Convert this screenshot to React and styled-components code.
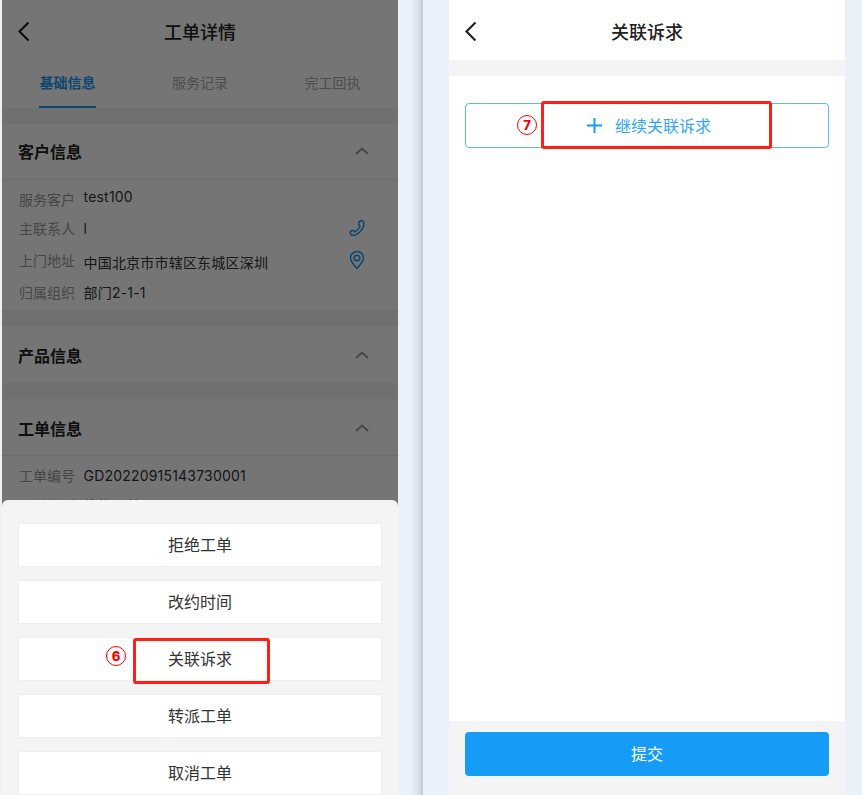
import React from "react";
import styled, { createGlobalStyle } from "styled-components";

const GlobalStyle = createGlobalStyle`
  html, body {
    margin: 0;
    padding: 0;
    height: 100%;
    background: #eaf1fa;
  }
  * {
    box-sizing: border-box;
  }
`;

const FONT = `Inter, "Noto Sans CJK SC", sans-serif`;

const Page = styled.div`
  display: flex;
  width: 862px;
  height: 795px;
  overflow: hidden;
  padding-left: 2px;
  background: #eaf1fa;
  font-family: ${FONT};
`;

const Phone = styled.div`
  position: relative;
  flex: 0 0 396px;
  height: 795px;
  display: flex;
  flex-direction: column;
  overflow: hidden;
  background: #f4f4f4;
`;

const Gutter = styled.div`
  flex: 0 0 51px;
  display: flex;
  padding-left: 12px;
`;

const Shade = styled.div`
  width: 13px;
  height: 100%;
  background: linear-gradient(90deg, #eaf1fa 0%, #dde3ec 60%, #c4cad2 100%);
`;

const Header = styled.div`
  position: relative;
  display: flex;
  align-items: center;
  justify-content: center;
  flex: 0 0 ${(p) => p.$height}px;
  padding-top: ${(p) => p.$pad || 0}px;
  background: #fff;
`;

const Back = styled.svg`
  position: absolute;
  left: 15px;
  top: 21px;
  width: 14px;
  height: 21px;
  fill: none;
  stroke: #222;
  stroke-width: 2.2;
`;

const Title = styled.div`
  font-size: 18px;
  font-weight: 500;
  color: #222;
`;

const Tabs = styled.div`
  display: flex;
  justify-content: space-between;
  flex: 0 0 54px;
  padding: 0 37px;
  background: #fff;
`;

const Tab = styled.div`
  padding-top: 19px;
  width: 57px;
  height: 54px;
  font-size: 14px;
  line-height: 20px;
  text-align: center;
  font-weight: ${(p) => (p.$active ? 700 : 400)};
  color: ${(p) => (p.$active ? "#1a9af5" : "#aaa")};
  border-bottom: ${(p) => (p.$active ? "2px solid #1a9af5" : "0")};
`;

const Section = styled.div`
  margin-top: 16px;
  background: #fff;
  padding-bottom: ${(p) => p.$pad || 0}px;
`;

const SectionHead = styled.div`
  display: flex;
  align-items: center;
  justify-content: space-between;
  height: ${(p) => p.$height || 56}px;
  padding: ${(p) => (p.$low ? "2px 29px 0 16px" : "0 29px 2px 16px")};
  font-size: 16px;
  font-weight: 700;
  color: #222;
  border-bottom: ${(p) => (p.$line ? "1px solid #eee" : "0")};
`;

const Chevron = styled.svg`
  width: 14px;
  height: 8px;
  fill: none;
  stroke: #999;
  stroke-width: 2;
`;

const Rows = styled.div`
  padding: 4px 16px 0 17px;
`;

const Row = styled.div`
  display: flex;
  align-items: center;
  height: ${(p) => p.$height || 30}px;
  font-size: 14px;
`;

const Label = styled.span`
  flex: 0 0 64.5px;
  color: #999;
`;

const Value = styled.span`
  flex: 1;
  color: #333;
  letter-spacing: 0.2px;
  margin-top: ${(p) => p.$nudge || 0}px;
`;

const RowIcon = styled.svg`
  width: 18px;
  height: 18px;
  margin-right: 16px;
  fill: none;
  stroke: #1a9af5;
  stroke-width: 1.5;
`;

const Dim = styled.div`
  position: absolute;
  inset: 0;
  background: rgba(0, 0, 0, 0.54);
`;

const Sheet = styled.div`
  position: absolute;
  left: 0;
  right: 0;
  bottom: 0;
  top: 500px;
  display: flex;
  flex-direction: column;
  gap: 13px;
  padding: 23px 16px 0;
  background: #f4f4f4;
  border-radius: 6px 6px 0 0;
`;

const SheetButton = styled.div`
  position: relative;
  flex: 0 0 44px;
  display: flex;
  align-items: center;
  justify-content: center;
  padding-bottom: 2px;
  font-size: 16px;
  color: #333;
  background: #fff;
  border: 1px solid #eee;
`;

const Callout = styled.div`
  position: absolute;
  left: ${(p) => p.$left}px;
  top: ${(p) => p.$top}px;
  width: ${(p) => p.$width}px;
  height: ${(p) => p.$height}px;
  border: 3px solid #fe2016;
  border-radius: 3px;
`;

const Mark = styled.span`
  position: absolute;
  left: ${(p) => p.$left}px;
  top: ${(p) => p.$top}px;
  width: 20px;
  height: 20px;
  display: flex;
  align-items: center;
  justify-content: center;
  font-size: 13px;
  font-weight: 800;
  line-height: 1;
  color: #f00;
  border: 1px solid #f00;
  border-radius: 50%;
`;

const Body = styled.div`
  flex: 1;
  margin-top: 16px;
  padding: 27px 16px 0;
  background: #fff;
`;

const AddButton = styled.div`
  position: relative;
  display: flex;
  align-items: center;
  justify-content: center;
  gap: 13px;
  height: 45px;
  padding: 0 0 2px 4px;
  font-size: 16px;
  color: #35a5f5;
  border: 1px solid #5fb6f5;
  border-radius: 4px;
`;

const Plus = styled.svg`
  width: 15px;
  height: 15px;
  margin-top: 2px;
  stroke: #169bf7;
  stroke-width: 2;
`;

const Footer = styled.div`
  flex: 0 0 74px;
  padding: 11px 16px 0;
  background: #f4f4f4;
`;

const Submit = styled.div`
  display: flex;
  align-items: center;
  justify-content: center;
  height: 44px;
  padding-bottom: 2px;
  font-size: 16px;
  color: #fff;
  background: #169bf7;
  border-radius: 4px;
`;

const BackIcon = () => (
  <Back viewBox="0 0 14 21">
    <path d="M11.5 1.5 2.5 10.5l9 9" />
  </Back>
);

const Up = () => (
  <Chevron viewBox="0 0 14 8">
    <path d="M1 7 7 1.5 13 7" />
  </Chevron>
);

const actions = ["拒绝工单", "改约时间", "关联诉求", "转派工单", "取消工单"];

const App = () => {
  return (
    <Page>
      <GlobalStyle />
      <Phone>
        <Header $height={54} $pad={7}>
          <BackIcon />
          <Title>工单详情</Title>
        </Header>
        <Tabs>
          <Tab $active>基础信息</Tab>
          <Tab>服务记录</Tab>
          <Tab>完工回执</Tab>
        </Tabs>
        <Section $pad={3}>
          <SectionHead $line>
            客户信息
            <Up />
          </SectionHead>
          <Rows>
            <Row $height={29}>
              <Label>服务客户</Label>
              <Value $nudge={-4}>test100</Value>
            </Row>
            <Row $height={29}>
              <Label>主联系人</Label>
              <Value $nudge={2}>l</Value>
              <RowIcon viewBox="0 0 18 18">
                <path d="M13 1.5c1.5 0 3 1.3 3 2.8 0 2.6-1.6 6-4 8.4-2 2-4.4 3.600-6.600 3.600-1.500 0-3-1.200-3.200-2.500 0-1 1-2 2.200-2.200 1-.1 2 .5 2.400 1.200 1.500-.8 4.400-3.600 5.200-5.600-.8-.5-1.500-1.400-1.400-2.500.1-1.400 1-2.700 2.400-2.700Z" />
              </RowIcon>
            </Row>
            <Row $height={35}>
              <Label>上门地址</Label>
              <Value $nudge={4}>中国北京市市辖区东城区深圳</Value>
              <RowIcon viewBox="0 0 18 18">
                <path d="M9 17.500C6 14 2.500 10.500 2.500 7a6.500 6.500 0 0 1 13 0c0 3.500-3.500 7-6.500 10.500Z" />
                <circle cx="9" cy="7" r="2.800" />
              </RowIcon>
            </Row>
            <Row>
              <Label>归属组织</Label>
              <Value>部门2-1-1</Value>
            </Row>
          </Rows>
        </Section>
        <Section $pad={1}>
          <SectionHead $low>
            产品信息
            <Up />
          </SectionHead>
        </Section>
        <Section>
          <SectionHead $line $low $height={57}>
            工单信息
            <Up />
          </SectionHead>
          <Rows>
            <Row>
              <Label>工单编号</Label>
              <Value>GD20220915143730001</Value>
            </Row>
            <Row>
              <Label>工单类型</Label>
              <Value>维修工单</Value>
            </Row>
          </Rows>
        </Section>
        <Dim />
        <Sheet>
          {actions.map((name) => (
            <SheetButton key={name}>
              {name}
              {name === "关联诉求" && (
                <>
                  <Mark $left={87} $top={8}>
                    6
                  </Mark>
                  <Callout $left={114} $top={0} $width={137} $height={46} />
                </>
              )}
            </SheetButton>
          ))}
        </Sheet>
      </Phone>
      <Gutter>
        <Shade />
      </Gutter>
      <Phone>
        <Header $height={60} $pad={2}>
          <BackIcon />
          <Title>关联诉求</Title>
        </Header>
        <Body>
          <AddButton>
            <Plus viewBox="0 0 15 15">
              <path d="M7.500 0v15M0 7.500h15" />
            </Plus>
            继续关联诉求
            <Mark $left={51} $top={11}>
              7
            </Mark>
            <Callout $left={75} $top={-3} $width={231} $height={48} />
          </AddButton>
        </Body>
        <Footer>
          <Submit>提交</Submit>
        </Footer>
      </Phone>
    </Page>
  );
};

export default App;
